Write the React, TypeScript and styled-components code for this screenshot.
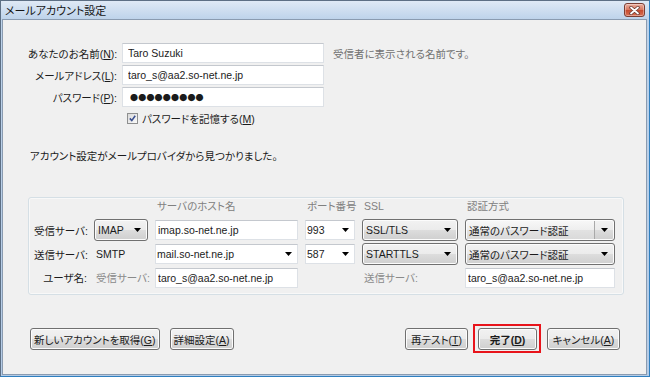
import React from 'react'
import styled, { createGlobalStyle, css } from 'styled-components'

const GlobalStyle = createGlobalStyle`
  html, body {
    margin: 0;
    padding: 0;
  }
  body {
    width: 650px;
    height: 377px;
    overflow: hidden;
    font-family: 'Liberation Sans', 'Noto Sans CJK JP', sans-serif;
    font-size: 10.5px;
    font-feature-settings: 'palt';
    color: #1b1b1b;
  }
`

const Frame = styled.div`
  box-sizing: border-box;
  width: 650px;
  height: 377px;
  display: flex;
  flex-direction: column;
  border: 1px solid #5d6f84;
  border-right-color: #2f7fbf;
  border-bottom-color: #2f7fbf;
  background: linear-gradient(#dfe9f5, #bcd2ea 19px, #b4cbe6);
  padding: 0 2px 1px 1px;
`
const TitleBar = styled.div`
  height: 18px;
  display: flex;
  align-items: center;
  justify-content: space-between;
  padding-left: 3px;
`
const Title = styled.span`
  font-size: 11px;
  color: #151515;
`
const CloseButton = styled.div`
  box-sizing: border-box;
  width: 21px;
  height: 14px;
  margin-right: 2px;
  border: 1px solid #7b3d33;
  border-radius: 3px;
  background: linear-gradient(#eaae9f, #d9775f 48%, #c64a2e 52%, #d86f53);
  box-shadow: inset 0 0 0 1px rgba(255, 255, 255, 0.35);
  display: flex;
  align-items: center;
  justify-content: center;
`
const Client = styled.div`
  flex: 1;
  display: flex;
  flex-direction: column;
  background: #f0f0f0;
  border: 1px solid #8a9bb0;
  padding: 23px 22px 0 25px;
`
const IdentityGrid = styled.div`
  display: grid;
  grid-template-columns: 89px 202px auto;
  grid-template-rows: 20px 20px 20px 18px;
  row-gap: 2px;
  column-gap: 5px;
  align-items: center;
`
const Label = styled.label`
  text-align: right;
  white-space: nowrap;
`
const Hint = styled.span`
  margin-left: 4px;
  color: #707070;
`
const fieldBase = css`
  box-sizing: border-box;
  height: 20px;
  width: 100%;
  margin: 0;
  background: #fff;
  border: 1px solid #dde1e6;
  border-top-color: #c4c8ce;
  color: #1b1b1b;
`
const Field = styled.input<{ $pad?: number; $mask?: boolean }>`
  ${fieldBase}
  font: inherit;
  padding: 0 ${(p) => p.$pad ?? 5}px;
  outline: none;
  ${(p) =>
    p.$mask &&
    css`
      font-family: 'Noto Sans CJK JP', sans-serif;
      font-size: 8px;
      letter-spacing: 0.2px;
      padding-left: 7px;
    `}
`
const CheckRow = styled.label`
  grid-column: 2;
  display: flex;
  align-items: center;
  gap: 4px;
  padding-left: 5px;
`
const CheckBox = styled.span`
  box-sizing: border-box;
  width: 11px;
  height: 11px;
  border: 1px solid #8e8f8f;
  background: linear-gradient(135deg, #d9d9d9, #fbfbfb);
  display: inline-flex;
  align-items: center;
  justify-content: center;
`
const Notice = styled.p`
  margin: 22px 0 0 2px;
  line-height: 14px;
`
const GroupBox = styled.div`
  margin-top: 34px;
  display: grid;
  grid-template-columns: 53px 54px 143px 50px 96px 150px;
  grid-template-rows: 19px 22px 22px 21px;
  column-gap: 7px;
  row-gap: 2px;
  align-items: center;
  padding: 0 8px 6px 5px;
  border: 1px solid #d5dfe5;
  border-radius: 3px;
  box-shadow: inset 0 0 0 1px #f8f8f8;
`
const ColumnHead = styled.span`
  align-self: start;
  line-height: 16px;
  padding-left: 2px;
  white-space: nowrap;
  color: #808080;
`
const RowLabel = styled.span`
  text-align: right;
  white-space: nowrap;
`
const Plain = styled.span<{ $muted?: boolean }>`
  padding-left: 2px;
  white-space: nowrap;
  color: ${(p) => (p.$muted ? '#8a8a8a' : '#1b1b1b')};
`
const Combo = styled.div`
  ${fieldBase}
  display: flex;
  align-items: center;
  justify-content: space-between;
  padding: 0 5px 0 1px;
`
const Select = styled.div`
  box-sizing: border-box;
  height: 22px;
  display: flex;
  align-items: center;
  border: 1px solid #707070;
  border-radius: 3px;
  background: linear-gradient(#f2f2f2 0%, #ebebeb 50%, #dddddd 50%, #cfcfcf 100%);
  box-shadow: inset 0 0 0 1px #fcfcfc;
  padding-right: 6px;
`
const SelectValue = styled.span<{ $focused?: boolean }>`
  flex: 1;
  align-self: stretch;
  display: flex;
  align-items: center;
  padding-left: 3px;
  margin-right: 6px;
  white-space: nowrap;
  ${(p) =>
    p.$focused &&
    css`
      margin: 1px 6px 1px 1px;
      padding-left: 2px;
      border-right: 1px solid #a9a9a9;
      background: linear-gradient(#f7f7f7, #eeeeee 50%, #e2e2e2 50%, #dadada);
    `}
`
const ButtonBar = styled.div`
  margin-top: 33px;
  display: flex;
  justify-content: space-between;
  padding: 0 4px 0 2px;
`
const ButtonGroup = styled.div`
  display: flex;
  gap: 10px;
`
const Button = styled.button<{ $primary?: boolean; $minWidth?: number }>`
  position: relative;
  box-sizing: border-box;
  height: 22px;
  min-width: ${(p) => p.$minWidth ?? 63}px;
  padding: 0 3px;
  border: 1px solid #707070;
  border-radius: 3px;
  background: linear-gradient(#f2f2f2 0%, #ebebeb 50%, #dddddd 50%, #cfcfcf 100%);
  box-shadow: inset 0 0 0 1px #fcfcfc;
  font: inherit;
  font-weight: ${(p) => (p.$primary ? 700 : 400)};
  color: #1b1b1b;
  white-space: nowrap;
  ${(p) =>
    p.$primary &&
    css`
      &::after {
        content: '';
        position: absolute;
        inset: -5px -5px -4px -6px;
        border: 2px solid #e8141b;
        pointer-events: none;
      }
    `}
`

const Arrow = () => (
  <svg width="7" height="4" viewBox="0 0 7 4">
    <path d="M0 0h7L3.5 4z" fill="#000" />
  </svg>
)

export default function App() {
  return (
    <>
      <GlobalStyle />
      <Frame>
        <TitleBar>
          <Title>メールアカウント設定</Title>
          <CloseButton>
            <svg width="11" height="9" viewBox="0 0 11 9">
              <path d="M2 1.5l7 6M9 1.5l-7 6" stroke="#6a3a33" strokeWidth="3.4" strokeLinecap="round" />
              <path d="M2 1.5l7 6M9 1.5l-7 6" stroke="#fff" strokeWidth="1.8" strokeLinecap="round" />
            </svg>
          </CloseButton>
        </TitleBar>
        <Client>
          <IdentityGrid>
            <Label>
              あなたのお名前(<u>N</u>):
            </Label>
            <Field readOnly value="Taro Suzuki" />
            <Hint>受信者に表示される名前です。</Hint>
            <Label>
              メールアドレス(<u>L</u>):
            </Label>
            <Field readOnly value="taro_s@aa2.so-net.ne.jp" />
            <span />
            <Label>
              パスワード(<u>P</u>):
            </Label>
            <Field readOnly $mask value="●●●●●●●●●" />
            <span />
            <CheckRow>
              <CheckBox>
                <svg width="7" height="7" viewBox="0 0 7 7">
                  <path d="M0.8 3.4L2.8 5.6L6.2 0.8" fill="none" stroke="#3b4f8f" strokeWidth="1.6" />
                </svg>
              </CheckBox>
              <span>
                パスワードを記憶する(<u>M</u>)
              </span>
            </CheckRow>
          </IdentityGrid>

          <Notice>アカウント設定がメールプロバイダから見つかりました。</Notice>

          <GroupBox>
            <span />
            <span />
            <ColumnHead>サーバのホスト名</ColumnHead>
            <ColumnHead>ポート番号</ColumnHead>
            <ColumnHead>SSL</ColumnHead>
            <ColumnHead>認証方式</ColumnHead>

            <RowLabel>受信サーバ:</RowLabel>
            <Select>
              <SelectValue>IMAP</SelectValue>
              <Arrow />
            </Select>
            <Field readOnly $pad={2} value="imap.so-net.ne.jp" />
            <Combo>
              993
              <Arrow />
            </Combo>
            <Select>
              <SelectValue>SSL/TLS</SelectValue>
              <Arrow />
            </Select>
            <Select>
              <SelectValue $focused>通常のパスワード認証</SelectValue>
              <Arrow />
            </Select>

            <RowLabel>送信サーバ:</RowLabel>
            <Plain>SMTP</Plain>
            <Combo>
              mail.so-net.ne.jp
              <Arrow />
            </Combo>
            <Combo>
              587
              <Arrow />
            </Combo>
            <Select>
              <SelectValue>STARTTLS</SelectValue>
              <Arrow />
            </Select>
            <Select>
              <SelectValue>通常のパスワード認証</SelectValue>
              <Arrow />
            </Select>

            <RowLabel>ユーザ名:</RowLabel>
            <Plain $muted>受信サーバ:</Plain>
            <Field readOnly $pad={2} value="taro_s@aa2.so-net.ne.jp" />
            <span />
            <Plain $muted>送信サーバ:</Plain>
            <Field readOnly $pad={2} value="taro_s@aa2.so-net.ne.jp" />
          </GroupBox>

          <ButtonBar>
            <ButtonGroup>
              <Button>
                新しいアカウントを取得(<u>G</u>)
              </Button>
              <Button>
                詳細設定(<u>A</u>)
              </Button>
            </ButtonGroup>
            <ButtonGroup>
              <Button>
                再テスト(<u>T</u>)
              </Button>
              <Button $primary $minWidth={59}>
                完了(<u>D</u>)
              </Button>
              <Button $minWidth={73}>
                キャンセル(<u>A</u>)
              </Button>
            </ButtonGroup>
          </ButtonBar>
        </Client>
      </Frame>
    </>
  )
}
